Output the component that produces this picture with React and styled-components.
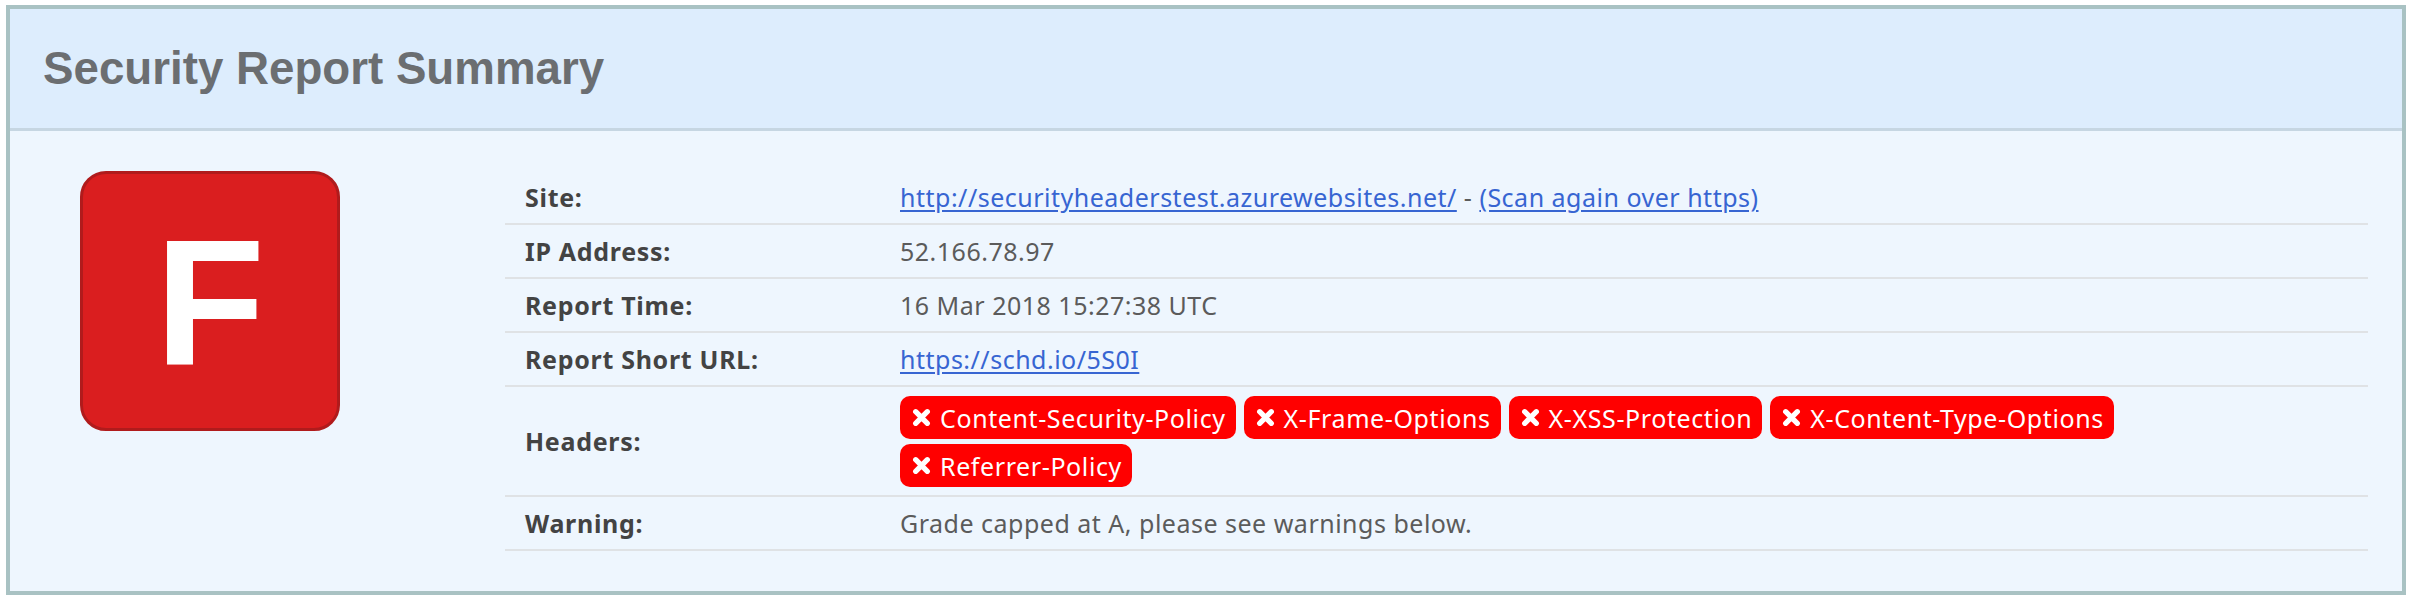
import { createGlobalStyle, styled } from 'styled-components'

const GlobalStyle = createGlobalStyle`
  body {
    margin: 0;
    background: #fff;
    font-family: "Noto Sans", "Open Sans", sans-serif;
  }
`

const rows = [
  { label: 'IP Address:', value: '52.166.78.97' },
  { label: 'Report Time:', value: '16 Mar 2018 15:27:38 UTC' },
]

const missing = [
  'Content-Security-Policy',
  'X-Frame-Options',
  'X-XSS-Protection',
  'X-Content-Type-Options',
  'Referrer-Policy',
]

const Cross = () => (
  <svg viewBox='0 0 18 18' aria-hidden='true'>
    <path d='M3.5 3.5 L14.5 14.5 M14.5 3.5 L3.5 14.5' stroke='currentColor' strokeWidth='5' strokeLinecap='round' fill='none' />
  </svg>
)

const App = () => {
  return (
    <>
      <GlobalStyle />
      <Wrapper>
        <Header>
          <h1>Security Report Summary</h1>
        </Header>
        <Body>
          <GradeCol>
            <Grade>F</Grade>
          </GradeCol>
          <Table>
            <Row>
              <Label>Site:</Label>
              <Value>
                <a href='#'>http://securityheaderstest.azurewebsites.net/</a>
                {' - '}
                <a href='#'>(Scan again over https)</a>
              </Value>
            </Row>
            {rows.map((r) => (
              <Row key={r.label}>
                <Label>{r.label}</Label>
                <Value>{r.value}</Value>
              </Row>
            ))}
            <Row>
              <Label>Report Short URL:</Label>
              <Value>
                <a href='#'>https://schd.io/5S0I</a>
              </Value>
            </Row>
            <Row $tall>
              <Label>Headers:</Label>
              <Badges>
                {missing.map((h) => (
                  <Badge key={h}>
                    <Cross />
                    {h}
                  </Badge>
                ))}
              </Badges>
            </Row>
            <Row>
              <Label>Warning:</Label>
              <Value>Grade capped at A, please see warnings below.</Value>
            </Row>
          </Table>
        </Body>
      </Wrapper>
    </>
  )
}

const Wrapper = styled.section`
  margin: 5px 6px;
  border: 4px solid #a9c2c3;
  background: #eef6fe;
`

const Header = styled.header`
  height: 119px;
  display: flex;
  align-items: center;
  padding-left: 33px;
  background: #ddedfd;
  border-bottom: 3px solid #c6d6e2;

  h1 {
    margin: 0;
    font-family: "Liberation Sans", Arial, sans-serif;
    font-weight: 700;
    font-size: 45.7px;
    color: #6b6e71;
  }
`

const Body = styled.div`
  display: flex;
  padding: 40px 34px 40px 0;
`

const GradeCol = styled.div`
  width: 495px;
  flex-shrink: 0;
  padding: 0 0 0 70px;
  box-sizing: border-box;
`

const Grade = styled.div`
  width: 260px;
  height: 260px;
  box-sizing: border-box;
  display: flex;
  align-items: center;
  justify-content: center;
  background: #da1e1f;
  border: 3px solid #b01b1c;
  border-radius: 26px;
  color: #fff;
  font-family: "Liberation Sans", Arial, sans-serif;
  font-weight: 700;
  font-size: 180px;
  line-height: 1;
  padding-top: 4px;
`

const Table = styled.div`
  flex: 1;
`

const Row = styled.div`
  display: grid;
  grid-template-columns: 375px 1fr;
  align-items: center;
  min-height: ${(p) => (p.$tall ? '108px' : '52px')};
  border-bottom: 2px solid #dfe2e5;
  font-size: 25px;
`

const Label = styled.div`
  padding: 0 20px;
  font-weight: 700;
  letter-spacing: 0.7px;
  color: #434343;
`

const Value = styled.div`
  padding: 0 20px;
  letter-spacing: 0.5px;
  color: #5b5b5b;

  a {
    color: #3765d2;
    text-decoration: underline;
    text-underline-offset: 3px;
  }
`

const Badges = styled.div`
  display: flex;
  flex-wrap: wrap;
  gap: 5px 8px;
  padding: 8px 40px 7px 20px;
`

const Badge = styled.span`
  display: inline-flex;
  align-items: center;
  gap: 9px;
  height: 43px;
  padding: 0 10px 0 12px;
  background: #ff0000;
  border-radius: 10px;
  color: #fff;
  letter-spacing: 0.6px;

  svg {
    width: 19px;
    height: 19px;
  }
`

export default App
